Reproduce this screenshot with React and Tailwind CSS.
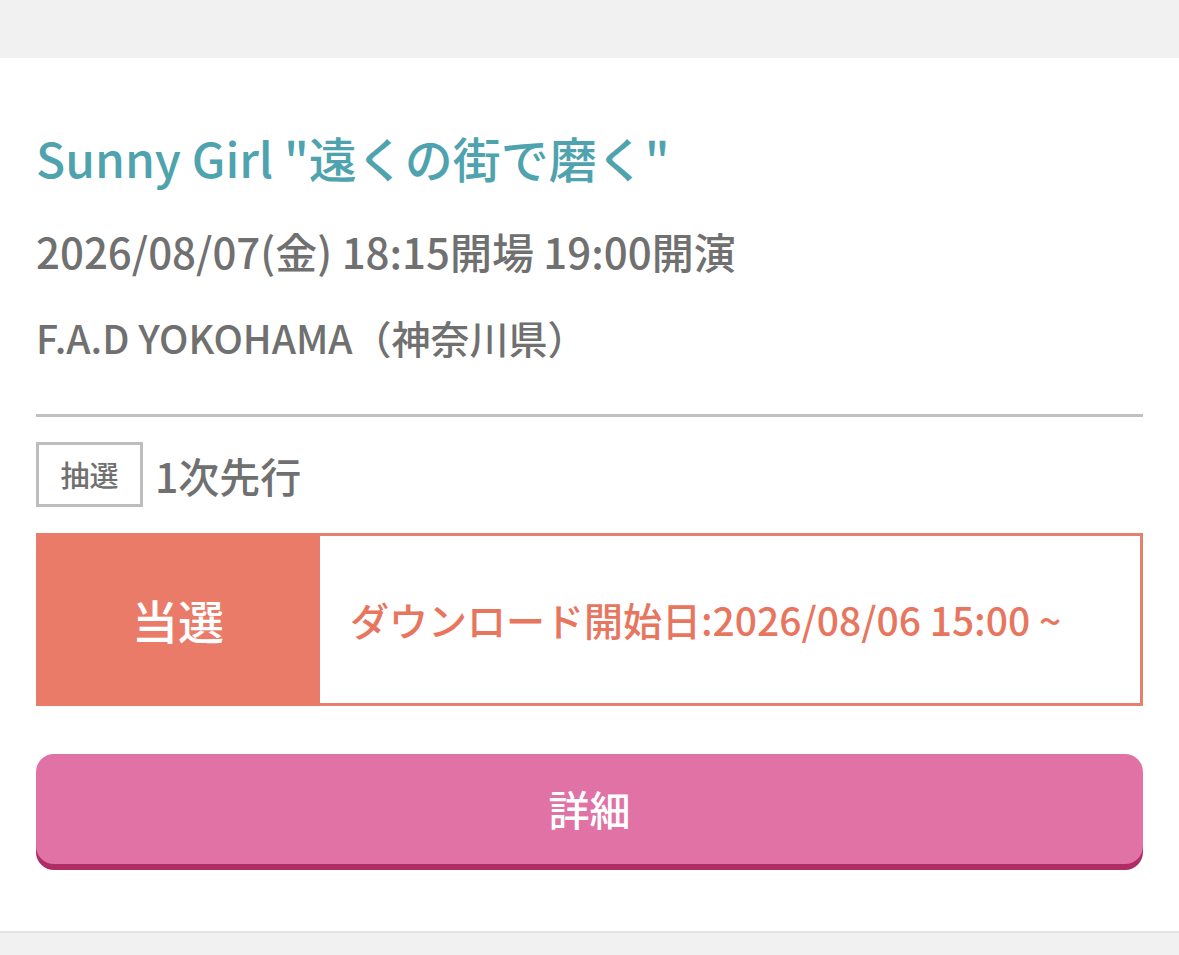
import React from "react";

export default function App() {
  return (
    <div
      className="h-[955px] w-full bg-[#f1f1f1] overflow-hidden"
      style={{ fontFamily: '"Noto Sans CJK JP", "Noto Sans", sans-serif' }}
    >
      <div className="h-[58px]" />
      <div className="bg-white border-b-[2px] border-[#e3e3e3] px-[36px] pt-[66px] pb-[67px]">
        <h1 className="text-[48px] leading-[66px] text-[#4fa3ae] font-medium">
          Sunny Girl "遠くの街で磨く"
        </h1>
        <p className="mt-[33px] text-[42px] leading-[56px] text-[#707070] font-medium">
          2026/08/07(金) 18:15開場 19:00開演
        </p>
        <p className="mt-[31px] text-[39px] leading-[54px] text-[#707070] font-medium">
          F.A.D YOKOHAMA（神奈川県）
        </p>
        <div className="mt-[50px] border-t-[3px] border-[#c0c0c0]" />
        <div className="mt-[25px] flex items-center">
          <div className="flex h-[65px] w-[107px] items-center justify-center border-[3px] border-[#bdbdbd] text-[29px] text-[#707070] font-medium">
            抽選
          </div>
          <span className="ml-[12px] text-[41px] leading-[56px] text-[#707070] font-medium">
            1次先行
          </span>
        </div>
        <div className="mt-[26px] flex h-[173px]">
          <div className="flex w-[284px] items-center justify-center bg-[#ea7b68] text-[46px] text-white font-medium">
            当選
          </div>
          <div className="flex flex-1 items-center border-[3px] border-l-0 border-[#e4806c] pl-[30px] text-[39px] text-[#e8765f] font-medium">
            ダウンロード開始日:2026/08/06 15:00 ~
          </div>
        </div>
        <button className="mt-[48px] flex h-[110px] w-full items-center justify-center rounded-[18px] bg-[#e072a5] text-[41px] text-white font-medium shadow-[0_6px_0_#ae2d65]">
          詳細
        </button>
      </div>
    </div>
  );
}
